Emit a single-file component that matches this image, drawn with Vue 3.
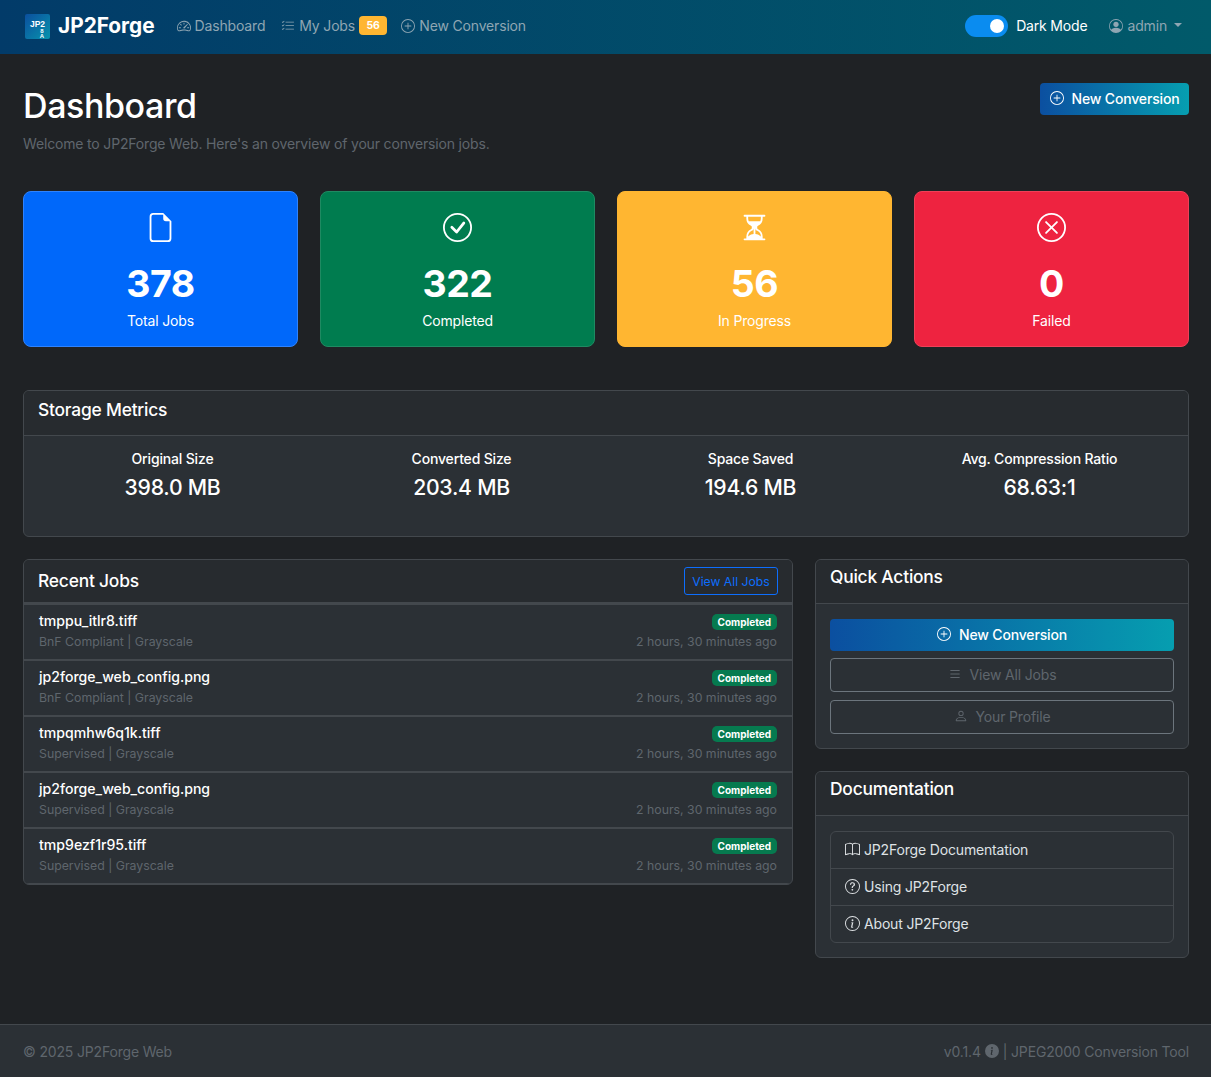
<script setup>
import { h } from 'vue';

const circle = 'M8 15A7 7 0 1 1 8 1a7 7 0 0 1 0 14m0 1A8 8 0 1 0 8 0a8 8 0 0 0 0 16';
const paths = {
  gauge: ['M8 4a.5.5 0 0 1 .5.5V6a.5.5 0 0 1-1 0V4.5A.5.5 0 0 1 8 4M3.732 5.732a.5.5 0 0 1 .707 0l.915.914a.5.5 0 1 1-.708.708l-.914-.915a.5.5 0 0 1 0-.707M2 10a.5.5 0 0 1 .5-.5h1.586a.5.5 0 0 1 0 1H2.5A.5.5 0 0 1 2 10m9.5 0a.5.5 0 0 1 .5-.5h1.5a.5.5 0 0 1 0 1H12a.5.5 0 0 1-.5-.5m.754-4.246a.39.39 0 0 0-.527-.02L7.547 9.31a.91.91 0 1 0 1.302 1.258l3.434-4.297a.39.39 0 0 0-.029-.518z', 'M0 10a8 8 0 1 1 15.547 2.661c-.442 1.253-1.845 1.602-2.932 1.25C11.309 13.488 9.475 13 8 13c-1.474 0-3.31.488-4.615.911-1.087.352-2.49.003-2.932-1.25A8 8 0 0 1 0 10m8-7a7 7 0 0 0-6.603 9.329c.203.575.923.876 1.68.63C4.397 12.533 6.358 12 8 12s3.604.532 4.923.96c.757.245 1.477-.056 1.68-.631A7 7 0 0 0 8 3'],
  listCheck: ['M5 11.5a.5.5 0 0 1 .5-.5h9a.5.5 0 0 1 0 1h-9a.5.5 0 0 1-.5-.5m0-4a.5.5 0 0 1 .5-.5h9a.5.5 0 0 1 0 1h-9a.5.5 0 0 1-.5-.5m0-4a.5.5 0 0 1 .5-.5h9a.5.5 0 0 1 0 1h-9a.5.5 0 0 1-.5-.5M3.854 2.146a.5.5 0 0 1 0 .708l-1.5 1.5a.5.5 0 0 1-.708 0l-.5-.5a.5.5 0 1 1 .708-.708L2 3.293l1.146-1.147a.5.5 0 0 1 .708 0m0 4a.5.5 0 0 1 0 .708l-1.5 1.5a.5.5 0 0 1-.708 0l-.5-.5a.5.5 0 1 1 .708-.708L2 7.293l1.146-1.147a.5.5 0 0 1 .708 0m0 4a.5.5 0 0 1 0 .708l-1.5 1.5a.5.5 0 0 1-.708 0l-.5-.5a.5.5 0 0 1 .708-.708l.146.147 1.146-1.147a.5.5 0 0 1 .708 0'],
  plus: [circle, 'M8 4a.5.5 0 0 1 .5.5v3h3a.5.5 0 0 1 0 1h-3v3a.5.5 0 0 1-1 0v-3h-3a.5.5 0 0 1 0-1h3v-3A.5.5 0 0 1 8 4'],
  personCircle: ['M11 6a3 3 0 1 1-6 0 3 3 0 0 1 6 0', 'M0 8a8 8 0 1 1 16 0A8 8 0 0 1 0 8m8-7a7 7 0 0 0-5.468 11.37C3.242 11.226 4.805 10 8 10s4.757 1.225 5.468 2.37A7 7 0 0 0 8 1'],
  file: ['M14 4.5V14a2 2 0 0 1-2 2H4a2 2 0 0 1-2-2V2a2 2 0 0 1 2-2h5.5zm-3 0A1.5 1.5 0 0 1 9.5 3V1H4a1 1 0 0 0-1 1v12a1 1 0 0 0 1 1h8a1 1 0 0 0 1-1V4.5z'],
  check: [circle, 'm10.97 4.97-.02.022-3.473 4.425-2.093-2.094a.75.75 0 0 0-1.06 1.06L6.97 11.03a.75.75 0 0 0 1.079-.02l3.992-4.99a.75.75 0 0 0-1.071-1.05'],
  hourglass: ['M2.5 15a.5.5 0 1 1 0-1h1v-1a4.5 4.5 0 0 1 2.557-4.06c.29-.139.443-.377.443-.59v-.7c0-.213-.154-.451-.443-.59A4.5 4.5 0 0 1 3.5 3V2h-1a.5.5 0 0 1 0-1h11a.5.5 0 0 1 0 1h-1v1a4.5 4.5 0 0 1-2.557 4.06c-.29.139-.443.377-.443.59v.7c0 .213.154.451.443.59A4.5 4.5 0 0 1 12.5 13v1h1a.5.5 0 0 1 0 1zm2-13v1c0 .537.12 1.045.337 1.5h6.326c.216-.455.337-.963.337-1.5V2zm3 6.35c0 .701-.478 1.236-1.011 1.492A3.5 3.5 0 0 0 4.5 13s.866-1.299 3-1.48zm1 0v3.17c2.134.181 3 1.48 3 1.48a3.5 3.5 0 0 0-1.989-3.158C8.978 9.586 8.5 9.052 8.5 8.351z'],
  cross: [circle, 'M4.646 4.646a.5.5 0 0 1 .708 0L8 7.293l2.646-2.647a.5.5 0 0 1 .708.708L8.707 8l2.647 2.646a.5.5 0 0 1-.708.708L8 8.707l-2.646 2.647a.5.5 0 0 1-.708-.708L7.293 8 4.646 5.354a.5.5 0 0 1 0-.708'],
  list: ['M2.5 12a.5.5 0 0 1 .5-.5h10a.5.5 0 0 1 0 1H3a.5.5 0 0 1-.5-.5m0-4a.5.5 0 0 1 .5-.5h10a.5.5 0 0 1 0 1H3a.5.5 0 0 1-.5-.5m0-4a.5.5 0 0 1 .5-.5h10a.5.5 0 0 1 0 1H3a.5.5 0 0 1-.5-.5'],
  person: ['M8 8a3 3 0 1 0 0-6 3 3 0 0 0 0 6m2-3a2 2 0 1 1-4 0 2 2 0 0 1 4 0m4 8c0 1-1 1-1 1H3s-1 0-1-1 1-4 6-4 6 3 6 4m-1-.004c-.001-.246-.154-.986-.832-1.664C11.516 10.68 10.289 10 8 10s-3.516.68-4.168 1.332c-.678.678-.83 1.418-.832 1.664z'],
  book: ['M1 2.828c.885-.37 2.154-.769 3.388-.893 1.33-.134 2.458.063 3.112.752v9.746c-.935-.53-2.12-.603-3.213-.493-1.18.12-2.37.461-3.287.811zm7.5-.141c.654-.689 1.782-.886 3.112-.752 1.234.124 2.503.523 3.388.893v9.923c-.918-.35-2.107-.692-3.287-.81-1.094-.111-2.278-.039-3.213.492zM8 1.783C7.015.936 5.587.81 4.287.94c-1.514.153-3.042.672-3.994 1.105A.5.5 0 0 0 0 2.5v11a.5.5 0 0 0 .707.455c.882-.4 2.303-.881 3.68-1.02 1.409-.142 2.59.087 3.223.877a.5.5 0 0 0 .78 0c.633-.79 1.814-1.019 3.222-.877 1.378.139 2.8.62 3.681 1.02A.5.5 0 0 0 16 13.5v-11a.5.5 0 0 0-.293-.455c-.952-.433-2.48-.952-3.994-1.105C10.413.809 8.985.936 8 1.783'],
  question: [circle, 'M5.255 5.786a.237.237 0 0 0 .241.247h.825c.138 0 .248-.113.266-.25.09-.656.54-1.134 1.342-1.134.686 0 1.314.343 1.314 1.168 0 .635-.374.927-.965 1.371-.673.489-1.206 1.06-1.168 1.987l.003.217a.25.25 0 0 0 .25.246h.811a.25.25 0 0 0 .25-.25v-.105c0-.718.273-.927 1.01-1.486.609-.463 1.244-.977 1.244-2.056 0-1.511-1.276-2.241-2.673-2.241-1.267 0-2.655.59-2.75 2.286m1.557 5.763c0 .533.425.927 1.01.927.609 0 1.028-.394 1.028-.927 0-.552-.42-.94-1.029-.94-.584 0-1.009.388-1.009.94'],
  info: [circle, 'm8.93 6.588-2.29.287-.082.38.45.083c.294.07.352.176.288.469l-.738 3.468c-.194.897.105 1.319.808 1.319.545 0 1.178-.252 1.465-.598l.088-.416c-.2.176-.492.246-.686.246-.275 0-.375-.193-.304-.533zM9 4.5a1 1 0 1 1-2 0 1 1 0 0 1 2 0'],
  infoFill: ['M8 16A8 8 0 1 0 8 0a8 8 0 0 0 0 16m.93-9.412-1 4.705c-.07.34.029.533.304.533.194 0 .487-.07.686-.246l-.088.416c-.287.346-.92.598-1.465.598-.703 0-1.002-.422-.808-1.319l.738-3.468c.064-.293.006-.399-.287-.47l-.451-.081.082-.381 2.29-.287zM8 5.5a1 1 0 1 1 0-2 1 1 0 0 1 0 2'],
};

const Icon = (props) => h('svg', {
  viewBox: '0 0 16 16',
  width: props.size || 14,
  height: props.size || 14,
  fill: 'currentColor',
}, paths[props.name].map(d => h('path', { d })));
Icon.props = ['name', 'size'];

const stats = [
  { value: 378, label: 'Total Jobs', icon: 'file', color: 'blue' },
  { value: 322, label: 'Completed', icon: 'check', color: 'green' },
  { value: 56, label: 'In Progress', icon: 'hourglass', color: 'amber' },
  { value: 0, label: 'Failed', icon: 'cross', color: 'red' },
];

const metrics = [
  { label: 'Original Size', value: '398.0 MB' },
  { label: 'Converted Size', value: '203.4 MB' },
  { label: 'Space Saved', value: '194.6 MB' },
  { label: 'Avg. Compression Ratio', value: '68.63:1' },
];

const jobs = [
  { name: 'tmppu_itlr8.tiff', meta: 'BnF Compliant | Grayscale' },
  { name: 'jp2forge_web_config.png', meta: 'BnF Compliant | Grayscale' },
  { name: 'tmpqmhw6q1k.tiff', meta: 'Supervised | Grayscale' },
  { name: 'jp2forge_web_config.png', meta: 'Supervised | Grayscale' },
  { name: 'tmp9ezf1r95.tiff', meta: 'Supervised | Grayscale' },
];

const docs = [
  { label: 'JP2Forge Documentation', icon: 'book' },
  { label: 'Using JP2Forge', icon: 'question' },
  { label: 'About JP2Forge', icon: 'info' },
];
</script>

<template>
  <div class="page">
    <nav class="navbar">
      <div class="brand">
        <svg class="logo" viewBox="0 0 25 25" width="25" height="25">
          <defs>
            <linearGradient id="logoGrad" x1="0" y1="0" x2="1" y2="1">
              <stop offset="0" stop-color="#0b4f9e" />
              <stop offset="1" stop-color="#0893ad" />
            </linearGradient>
          </defs>
          <rect width="25" height="25" rx="2" fill="url(#logoGrad)" />
          <text x="12.5" y="13" text-anchor="middle" class="logo-text">JP2</text>
          <text x="17" y="18.5" text-anchor="middle" class="logo-small">8</text>
          <text x="17" y="23.5" text-anchor="middle" class="logo-small">A</text>
        </svg>
        <span class="brand-name">JP2Forge</span>
      </div>
      <a class="nav-link"><Icon name="gauge" size="14" />Dashboard</a>
      <a class="nav-link"><Icon name="listCheck" size="14" />My Jobs<span class="nav-badge">56</span></a>
      <a class="nav-link"><Icon name="plus" size="14" />New Conversion</a>
      <div class="nav-right">
        <span class="switch"><span class="knob"></span></span>
        <span class="mode-label">Dark Mode</span>
        <a class="nav-link user"><Icon name="personCircle" size="14" />admin<span class="caret"></span></a>
      </div>
    </nav>

    <main class="content">
      <div class="page-head">
        <div>
          <h1>Dashboard</h1>
          <p class="lead">Welcome to JP2Forge Web. Here's an overview of your conversion jobs.</p>
        </div>
        <button class="btn-gradient head-btn"><Icon name="plus" size="14" />New Conversion</button>
      </div>

      <div class="stats">
        <div v-for="s in stats" :key="s.label" class="stat" :class="s.color">
          <Icon :name="s.icon" size="29" />
          <div class="stat-value">{{ s.value }}</div>
          <div class="stat-label">{{ s.label }}</div>
        </div>
      </div>

      <section class="card metrics-card">
        <div class="card-head metrics-head"><h5>Storage Metrics</h5></div>
        <div class="metrics">
          <div v-for="m in metrics" :key="m.label" class="metric">
            <div class="metric-label">{{ m.label }}</div>
            <div class="metric-value">{{ m.value }}</div>
          </div>
        </div>
      </section>

      <div class="columns">
        <section class="card jobs-card">
          <div class="card-head jobs-head">
            <h5>Recent Jobs</h5>
            <button class="btn-outline">View All Jobs</button>
          </div>
          <div v-for="(job, i) in jobs" :key="i" class="job">
            <div>
              <div class="job-name">{{ job.name }}</div>
              <div class="job-meta left-meta">{{ job.meta }}</div>
            </div>
            <div class="job-side">
              <span class="status">Completed</span>
              <div class="job-meta">2 hours, 30 minutes ago</div>
            </div>
          </div>
        </section>

        <div class="side">
          <section class="card">
            <div class="card-head"><h5>Quick Actions</h5></div>
            <div class="card-body actions">
              <button class="btn-gradient"><Icon name="plus" size="14" />New Conversion</button>
              <button class="btn-muted"><Icon name="list" size="14" />View All Jobs</button>
              <button class="btn-muted last-action"><Icon name="person" size="14" />Your Profile</button>
            </div>
          </section>
          <section class="card">
            <div class="card-head"><h5>Documentation</h5></div>
            <div class="card-body">
              <div class="doc-list">
                <a v-for="d in docs" :key="d.label" class="doc"><Icon :name="d.icon" size="15" />{{ d.label }}</a>
              </div>
            </div>
          </section>
        </div>
      </div>
    </main>

    <footer class="footer">
      <span>© 2025 JP2Forge Web</span>
      <span class="version">v0.1.4 <Icon name="infoFill" size="14" /> | JPEG2000 Conversion Tool</span>
    </footer>
  </div>
</template>

<style>
body {
  background: #1f2225;
}
</style>

<style scoped>
.page {
  font-family: Inter, "Liberation Sans", sans-serif;
  color: #fff;
  background: #1f2225;
  width: 1211px;
  height: 1077px;
  display: flex;
  flex-direction: column;
  overflow: hidden;
}
.page, .page * {
  letter-spacing: -0.012em;
}
.navbar {
  height: 54px;
  flex: none;
  display: flex;
  align-items: center;
  padding: 0 29px 2px 25px;
  box-sizing: border-box;
  background: linear-gradient(90deg, #023b69, #015a6a);
  font-size: 14px;
  line-height: 20px;
}
.brand {
  display: flex;
  align-items: center;
  gap: 8px;
  margin-right: 22px;
}
.logo-text {
  font: 700 8.5px "Liberation Sans", sans-serif;
  fill: #fff;
}
.logo-small {
  font: 700 6px "Liberation Sans", sans-serif;
  fill: #fff;
}
.brand-name {
  font-size: 20.8px;
  font-weight: 700;
  letter-spacing: 0;
}
.nav-link {
  display: inline-flex;
  align-items: center;
  gap: 4px;
  color: #8fa6b3;
  margin-right: 16px;
  margin-top: -1px;
}
.nav-badge {
  background: #ffb631;
  color: #fff;
  font-size: 10.5px;
  line-height: 12px;
  font-weight: 700;
  border-radius: 4px;
  padding: 3.5px 7.5px;
  margin-right: -2px;
}
.nav-right {
  margin-left: auto;
  display: flex;
  align-items: center;
}
.switch {
  width: 43px;
  height: 22px;
  border-radius: 11px;
  background: #0a8cf0;
  display: flex;
  align-items: center;
  justify-content: flex-end;
  padding: 0 4px;
  box-sizing: border-box;
}
.knob {
  width: 14px;
  height: 14px;
  border-radius: 50%;
  background: #fff;
}
.mode-label {
  margin-left: 8px;
  margin-right: 22px;
  margin-top: -1px;
}
.user {
  margin-right: 0;
}
.caret {
  width: 0;
  height: 0;
  border-left: 4px solid transparent;
  border-right: 4px solid transparent;
  border-top: 4px solid currentColor;
  margin-left: 3px;
  margin-bottom: 2px;
}
.content {
  flex: 1;
  padding: 0 22px 0 23px;
}
.page-head {
  display: flex;
  justify-content: space-between;
  align-items: flex-start;
  padding-top: 29px;
}
h1 {
  margin: 0;
  font-size: 34px;
  font-weight: 500;
  line-height: 46px;
}
.lead {
  margin: 4px 0 0;
  font-size: 14px;
  line-height: 21px;
  color: #5f666d;
}
.btn-gradient {
  display: flex;
  align-items: center;
  justify-content: center;
  gap: 8px;
  height: 32px;
  border: 0;
  border-radius: 4px;
  padding: 0 0 2px;
  font: 500 14px Inter, sans-serif;
  color: #fff;
  background: linear-gradient(90deg, #0b4fa0, #069eb0);
}
.head-btn {
  width: 149px;
}
.stats {
  display: grid;
  grid-template-columns: repeat(4, 1fr);
  gap: 22px;
  margin-top: 37px;
}
.stat {
  height: 156px;
  box-sizing: border-box;
  border-radius: 8px;
  border: 1px solid;
  display: flex;
  flex-direction: column;
  align-items: center;
  padding-top: 21px;
}
.blue { background: #0068fa; border-color: #2f83fd; }
.green { background: #007c4f; border-color: #1f8a62; }
.amber { background: #ffb631; border-color: #ffb631; }
.red { background: #ee2340; border-color: #f04058; }
.stat-value {
  font-size: 37.5px;
  font-weight: 700;
  line-height: 44px;
  margin-top: 20px;
}
.stat-label {
  font-size: 14px;
  line-height: 21px;
  margin-top: 4px;
}
.card {
  background: #2b3035;
  border: 1px solid #43484d;
  border-radius: 6px;
  overflow: hidden;
}
.metrics-card {
  margin-top: 43px;
  height: 147px;
  box-sizing: border-box;
}
.card-head {
  background: #272b2f;
  border-bottom: 1px solid #43484d;
  padding: 6px 14px 16px;
  height: 44px;
  box-sizing: border-box;
}
.metrics-head {
  height: 45px;
  padding-top: 8px;
}
h5 {
  margin: 0;
  font-size: 17.4px;
  line-height: 21px;
  font-weight: 500;
}
.metrics {
  display: grid;
  grid-template-columns: repeat(4, 1fr);
  padding: 12px 4px 0;
  text-align: center;
}
.metric-label {
  font-size: 14px;
  font-weight: 500;
  line-height: 21px;
}
.metric-value {
  font-size: 21.2px;
  font-weight: 500;
  line-height: 30px;
  margin-top: 3px;
}
.columns {
  display: grid;
  grid-template-columns: 770px 374px;
  gap: 22px;
  margin-top: 22px;
  align-items: start;
}
.jobs-head {
  display: flex;
  justify-content: space-between;
  align-items: center;
  padding: 0 14px;
  height: 43px;
}
.jobs-head h5 {
  margin-bottom: 2px;
}
.btn-outline {
  width: 94px;
  height: 28px;
  padding: 0;
  background: transparent;
  border: 1px solid #0d6efd;
  border-radius: 3px;
  color: #0d6efd;
  font: 400 12.2px Inter, sans-serif;
  letter-spacing: 0;
}
.job {
  height: 56px;
  box-sizing: border-box;
  border-top: 2px solid #43484d;
  display: flex;
  justify-content: space-between;
  padding: 5px 15px 0;
}
.job:last-child {
  height: 57px;
  border-bottom: 1px solid #43484d;
}
.job-name {
  font-size: 14.1px;
  font-weight: 500;
  line-height: 21px;
  letter-spacing: 0;
}
.job-meta {
  font-size: 12.3px;
  line-height: 18px;
  color: #5f666d;
  letter-spacing: 0;
}
.left-meta {
  margin-top: 2px;
}
.job-side {
  display: flex;
  flex-direction: column;
  align-items: flex-end;
}
.status {
  background: #067a4f;
  color: #fff;
  font-size: 10px;
  font-weight: 700;
  border-radius: 5px;
  padding: 3px 6px;
  margin: 4px 0 3px;
  line-height: 10px;
  letter-spacing: 0;
}
.side {
  display: flex;
  flex-direction: column;
  gap: 22px;
}
.card-body {
  padding: 15px 14px 14px;
}
.actions {
  display: flex;
  flex-direction: column;
  gap: 7px;
}
.btn-muted {
  display: flex;
  align-items: center;
  justify-content: center;
  gap: 8px;
  height: 34px;
  padding: 0 0 2px;
  background: transparent;
  border: 1px solid #6c757d;
  border-radius: 4px;
  color: #5f666d;
  font: 400 14px Inter, sans-serif;
}
.last-action {
  margin-top: 1px;
}
.doc-list {
  border: 1px solid #43484d;
  border-radius: 6px;
}
.doc {
  height: 37px;
  box-sizing: border-box;
  display: flex;
  align-items: center;
  gap: 4px;
  padding: 0 14px 2px;
  font-size: 14px;
  color: #dfe2e5;
  border-top: 1px solid #43484d;
}
.doc:first-child {
  border-top: 0;
  height: 36px;
}
.footer {
  height: 53px;
  flex: none;
  box-sizing: border-box;
  background: #2b3035;
  border-top: 1px solid #43484d;
  display: flex;
  justify-content: space-between;
  align-items: center;
  padding: 0 22px 0 23px;
  font-size: 14px;
  color: #5f666d;
}
.version {
  display: inline-flex;
  align-items: center;
  gap: 4px;
}
</style>
